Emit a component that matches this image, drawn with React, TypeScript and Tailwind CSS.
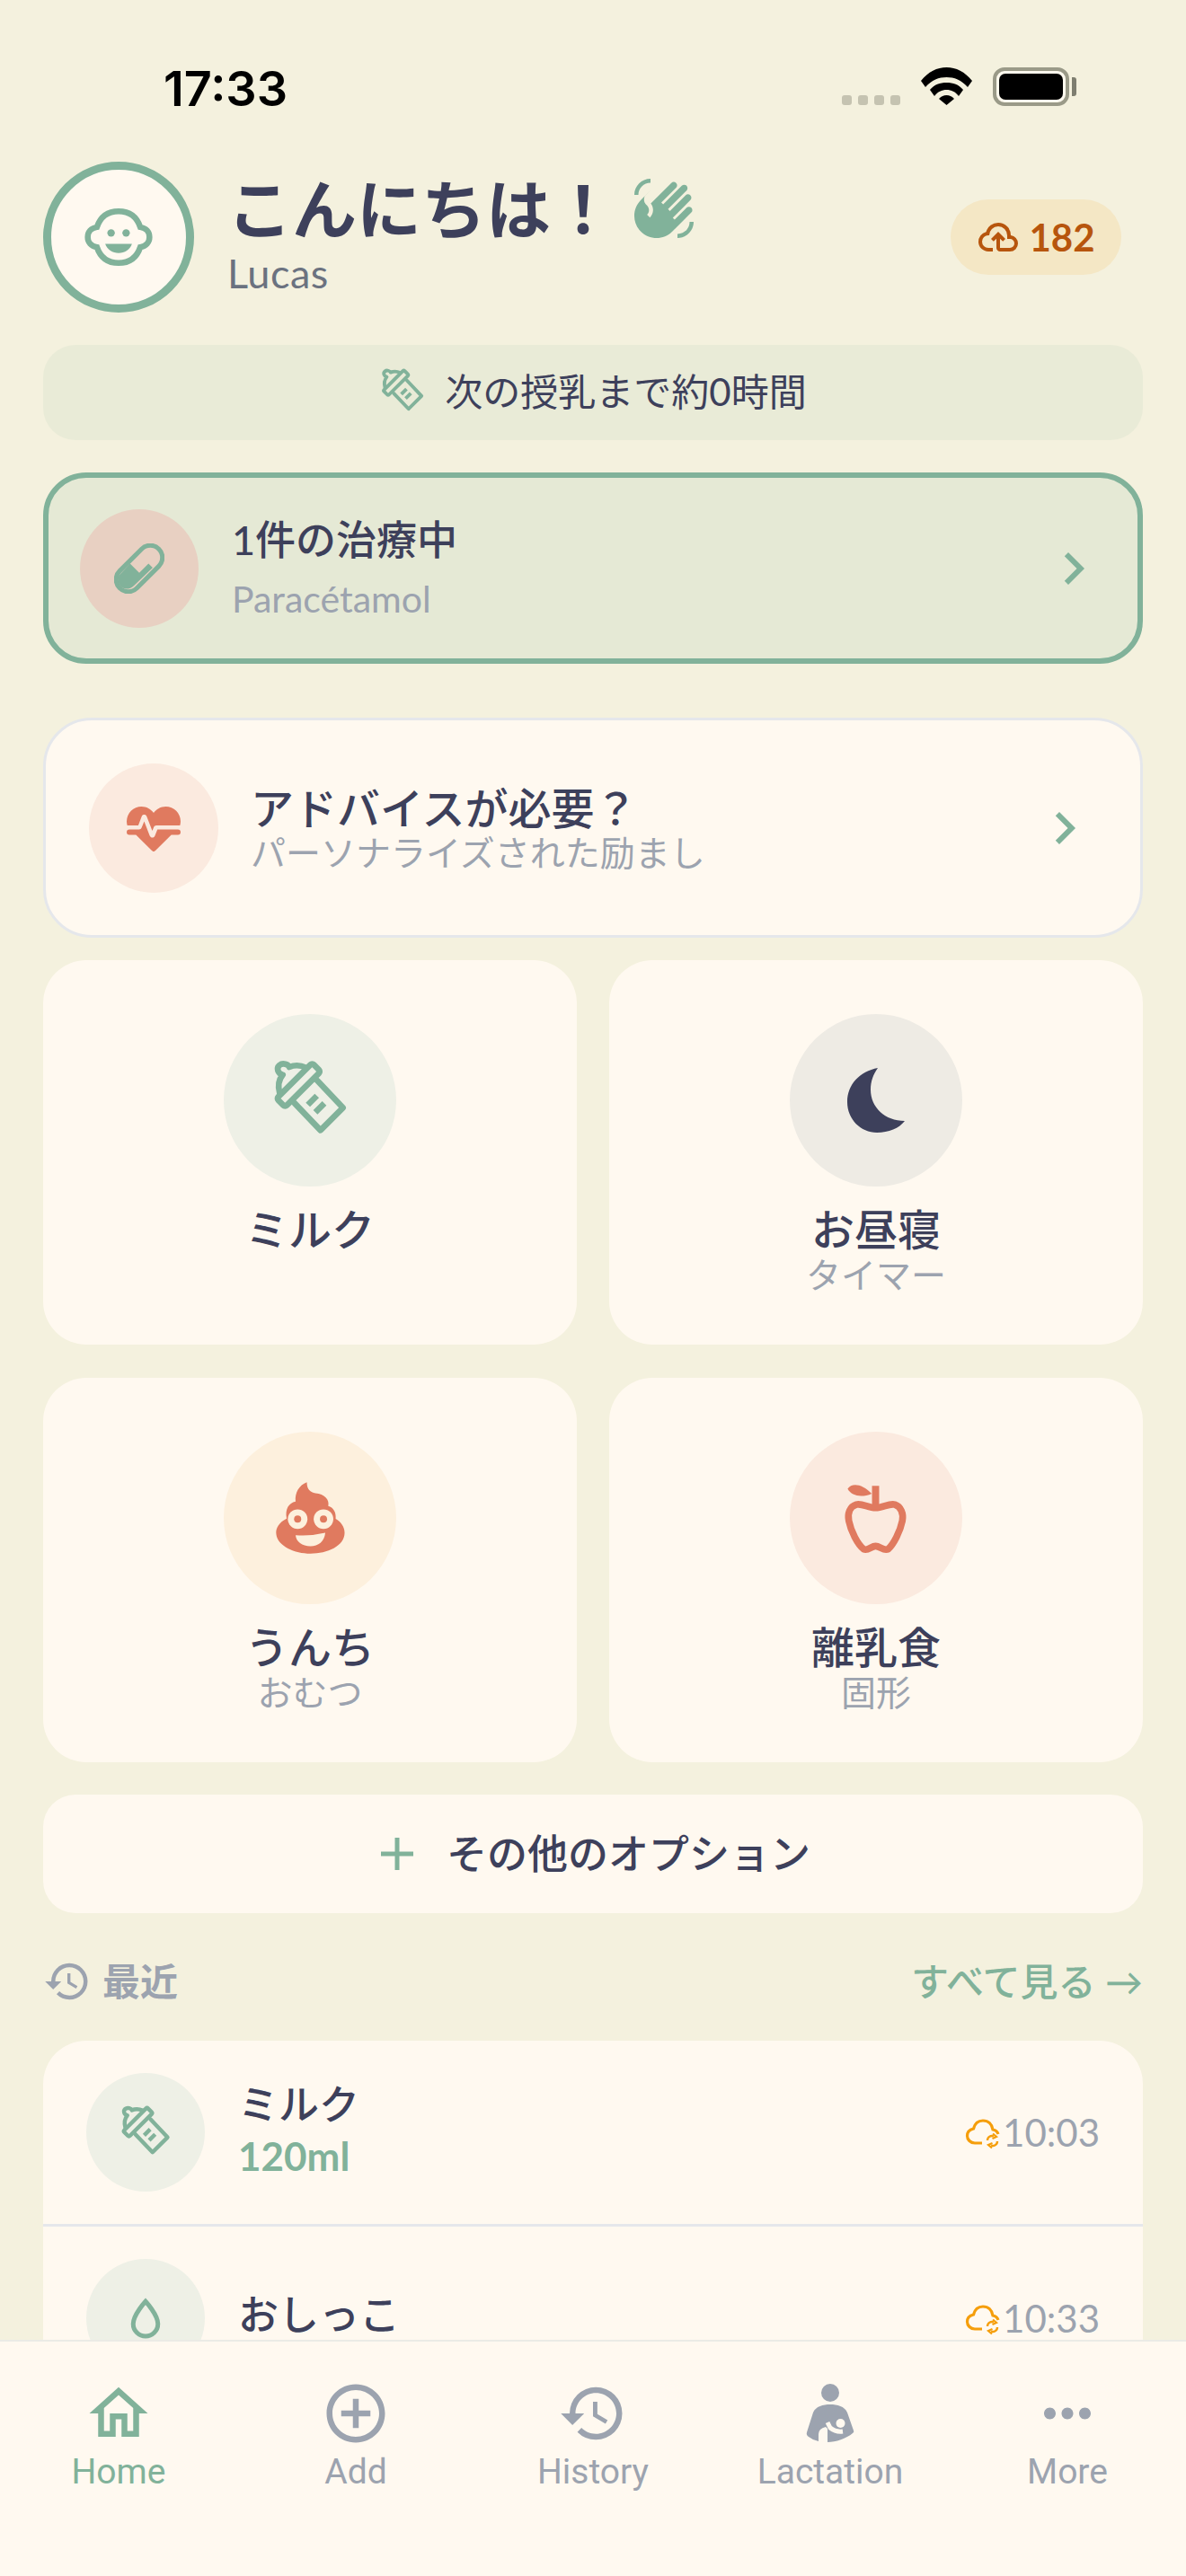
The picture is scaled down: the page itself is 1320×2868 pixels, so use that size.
import { MdAddCircleOutline, MdHistory, MdMoreHoriz } from "react-icons/md";

const jp = "font-['Lato','Noto_Sans_CJK_JP',sans-serif]";

function MdiPath({ d, className }: { d: string; className: string }) {
  return (
    <svg viewBox="0 0 24 24" fill="currentColor" className={className}>
      <path d={d} />
    </svg>
  );
}

const CHEVRON = "M8.59,16.58L13.17,12L8.59,7.41L10,6L16,12L10,18L8.59,16.58Z";
const HEART_PULSE =
  "M7.5,4A5.5,5.5 0 0,0 2,9.5C2,10 2.09,10.5 2.22,11H6.3L7.57,7.63C7.87,6.83 9.05,6.75 9.43,7.63L11.5,13L12.09,11.58C12.22,11.25 12.57,11 13,11H21.78C21.91,10.5 22,10 22,9.5A5.5,5.5 0 0,0 16.5,4C14.64,4 13,4.93 12,6.34C11,4.93 9.36,4 7.5,4V4M3,12.5A1,1 0 0,0 2,13.5A1,1 0 0,0 3,14.5H5.44L11,20C12,20.9 12,20.9 13,20L18.56,14.5H21A1,1 0 0,0 22,13.5A1,1 0 0,0 21,12.5H13.4L12.47,14.8C12.07,15.81 10.92,15.67 10.55,14.83L8.5,9.5L7.54,11.83C7.39,12.21 7.05,12.5 6.6,12.5H3Z";
const HAND_WAVE =
  "M23 17C23 20.31 20.31 23 17 23V21.5C19.5 21.5 21.5 19.5 21.5 17H23M1 7C1 3.69 3.69 1 7 1V2.5C4.5 2.5 2.5 4.5 2.5 7H1M8 4.32L3.41 8.92C.19 12.14 .19 17.37 3.41 20.59S11.86 23.81 15.08 20.59L22.15 13.5C22.64 13.03 22.64 12.24 22.15 11.75C21.66 11.26 20.87 11.26 20.38 11.75L15.96 16.17L15.25 15.46L21.79 8.92C22.28 8.43 22.28 7.64 21.79 7.15S20.5 6.66 20 7.15L14.19 13L13.5 12.27L20.37 5.38C20.86 4.89 20.86 4.1 20.37 3.61S19.09 3.12 18.6 3.61L11.71 10.5L11 9.8L16.5 4.32C17 3.83 17 3.04 16.5 2.55S15.22 2.06 14.73 2.55L7.11 10.17C8.33 11.74 8.22 14 6.78 15.42L5.72 14.36C6.67 13.41 6.67 11.86 5.72 10.9L5.36 10.55C4.87 10.06 4.6 9.41 4.6 8.72C4.6 8.2 4.76 7.7 5.04 7.28L8 4.32Z";
const CLOUD_UPLOAD =
  "M6.5 20Q4.22 20 2.61 18.43 1 16.85 1 14.58 1 12.63 2.17 11.1 3.35 9.57 5.25 9.15 5.88 6.85 7.75 5.43 9.63 4 12 4 14.93 4 16.96 6.04 19 8.07 19 11 20.73 11.2 21.86 12.5 23 13.78 23 15.5 23 17.38 21.69 18.69 20.38 20 18.5 20H13Q12.18 20 11.59 19.41 11 18.83 11 18V12.85L9.4 14.4L8 13L12 9L16 13L14.6 14.4L13 12.85V18H18.5Q19.55 18 20.27 17.27 21 16.55 21 15.5 21 14.45 20.27 13.73 19.55 13 18.5 13H17V11Q17 8.93 15.54 7.46 14.08 6 12 6 9.93 6 8.46 7.46 7 8.93 7 11H6.5Q5.05 11 4.03 12.03 3 13.05 3 14.5 3 15.95 4.03 17 5.05 18 6.5 18H9V20Z";
const HOME_OUTLINE = "M12 5.69L17 10.19V18H15V12H9V18H7V10.19L12 5.69M12 3L2 12H5V20H11V14H13V20H19V12H22L12 3Z";

function BottleIcon({ className }: { className: string }) {
  return (
    <svg viewBox="180 190 270 270" fill="none" stroke="currentColor" strokeWidth="20" strokeLinejoin="round" strokeLinecap="round" className={className}>
      <rect x="-84" y="-20" width="168" height="40" rx="8" transform="translate(277 274) rotate(-45)" />
      <path d="M264 335L350 425L425 350L340 260" />
      <path d="M308 340L338 310M333 365L363 335" strokeLinecap="butt" />
      <path d="M214 302C207 278 209 258 224 240C207 236 202 218 213 208C225 198 243 206 246 214C265 206 285 208 302 216" />
    </svg>
  );
}

function BabyFace({ className }: { className: string }) {
  return (
    <svg viewBox="0 0 84 72" className={className}>
      <path
        d="M42 5C29 5 20 12 16 24C9 25 5 30 5 36C5 42 9 47 16 48C20 60 29 67 42 67C55 67 64 60 68 48C75 47 79 42 79 36C79 30 75 25 68 24C64 12 55 5 42 5Z"
        fill="none"
        stroke="currentColor"
        strokeWidth="7"
      />
      <circle cx="33" cy="31" r="4.5" fill="currentColor" />
      <circle cx="51" cy="31" r="4.5" fill="currentColor" />
      <path d="M26 44H58C56 51 49 55 42 55C35 55 28 51 26 44Z" fill="currentColor" />
    </svg>
  );
}

function PillIcon({ className }: { className: string }) {
  return (
    <svg viewBox="0 0 60 60" className={className}>
      <rect x="-14.5" y="-33" width="29" height="66" rx="14.5" transform="translate(30 30) rotate(45)" fill="none" stroke="currentColor" strokeWidth="5.5" />
      <path d="M6 38L19 24L30 35L41 24L46 29L24 50C18 56 10 55 7 50C4 46 4 41 6 38Z" fill="currentColor" />
    </svg>
  );
}

function MoonIcon({ className }: { className: string }) {
  return (
    <svg viewBox="0 0 64 72" fill="currentColor" className={className}>
      <path d="M34 0C14 4 0 18 0 38C0 57 15 72 33 72C46 72 58 67 64 59C42 59 26 44 26 24C26 15 29 7 34 0Z" />
    </svg>
  );
}

function PoopIcon({ className }: { className: string }) {
  return (
    <svg viewBox="190 200 256 260" className={className}>
      <path
        d="M306 210C280 220 265 245 268 275C245 280 232 300 238 332C212 345 200 365 203 385C208 425 265 450 318 450C375 450 433 425 433 380C433 360 420 342 403 333C405 310 395 295 378 290C383 268 365 250 335 247C318 244 306 235 306 210Z"
        fill="#e07a5f"
      />
      <circle cx="275" cy="334" r="33" fill="#fdf0dd" />
      <circle cx="362" cy="334" r="33" fill="#fdf0dd" />
      <circle cx="275" cy="334" r="12" fill="#e07a5f" />
      <circle cx="362" cy="334" r="12" fill="#e07a5f" />
      <path d="M268 388Q318 392 368 380C365 410 345 425 318 425C290 425 270 410 268 388Z" fill="#fdf0dd" />
    </svg>
  );
}

function AppleIcon({ className }: { className: string }) {
  return (
    <svg viewBox="190 200 256 260" className={className}>
      <rect x="303" y="222" width="24" height="70" fill="#e07a5f" />
      <path d="M221 232C235 210 270 215 302 248C270 262 235 258 221 232Z" fill="#e07a5f" />
      <path
        d="M315 296C290 296 270 280 250 285C228 292 220 315 225 340C232 375 255 420 275 435C290 442 300 425 315 425C330 425 342 442 357 435C375 420 398 375 405 340C410 315 400 292 380 285C360 280 340 296 315 296Z"
        fill="none"
        stroke="#e07a5f"
        strokeWidth="23"
      />
    </svg>
  );
}

function CloudSync({ className }: { className: string }) {
  return (
    <svg viewBox="0 0 42 42" fill="none" stroke="currentColor" strokeWidth="3.2" className={className}>
      <path d="M19 33H11C6 33 2.5 29 2.5 25C2.5 21 5 18 9.5 17C11 11 15 8 20 8C26 8 30 12 31 18C33.5 18.5 36 20 37 23" />
      <path d="M25 30C25 26 29 24 32 25.5M36 31C36 35 32 37 29 35.5" strokeWidth="2.4" />
      <path d="M31 22.5L35 26L30.5 28M30 38.5L26 35L30.5 33" strokeWidth="2.2" />
    </svg>
  );
}

function DropIcon({ className }: { className: string }) {
  return (
    <svg viewBox="0 0 24 24" fill="none" stroke="currentColor" strokeWidth="2" className={className}>
      <path d="M12 4.5C12 4.5 6.5 10.5 6.5 14.5C6.5 17.6 9 20 12 20C15 20 17.5 17.6 17.5 14.5C17.5 10.5 12 4.5 12 4.5Z" />
    </svg>
  );
}

function NursingIcon({ className }: { className: string }) {
  return (
    <svg viewBox="0 0 78 78" className={className}>
      <circle cx="39" cy="16" r="10" fill="currentColor" />
      <path
        d="M39 29C31 29 23 31 20 38L13 60Q12 63 15 65Q20 69 26 70V62Q26 56 34 54L36 56V71C45 71 57 67 64 61Q66 60 65 58L58 38C55 31 47 29 39 29Z"
        fill="currentColor"
      />
      <circle cx="50.5" cy="50" r="5" fill="#fff9f0" />
      <path d="M36 49L39 55Q45 60 53 59" fill="none" stroke="#fff9f0" strokeWidth="5" />
    </svg>
  );
}

function StatusBar() {
  return (
    <div className="flex h-[180px] items-start justify-between pl-[182px] pr-[122px] pt-[69px]">
      <span className="font-['Inter',sans-serif] text-[54px] font-semibold leading-[60px] text-black">17:33</span>
      <div className="flex items-start pt-[6px]">
        <div className="mr-[23px] mt-[31px] flex gap-[7px]">
          {[0, 1, 2, 3].map((i) => (
            <span key={i} className="h-[11px] w-[11px] rounded-[3px] bg-[#c5c3b1]" />
          ))}
        </div>
        <svg viewBox="0 0 57 42" className="h-[42px] w-[57px]">
          <path d="M0 15C8 5 18 0 28.5 0S49 5 57 15L52 22C45 14 37 11 28.5 11S12 14 5 22Z" fill="#000" />
          <path d="M10 25C15 19 21 17 28.5 17S42 19 47 25L42 32C38 27 34 25 28.5 25S19 27 15 32Z" fill="#000" />
          <path d="M20 35C23 32 25 31 28.5 31S34 32 37 35L28.5 42Z" fill="#000" />
        </svg>
        <div className="ml-[23px] flex items-center">
          <div className="h-[43px] w-[85px] rounded-[13px] border-[4px] border-[#9a9a88] bg-[#fdf9ee] p-[3px]">
            <div className="h-full w-full rounded-[7px] bg-black" />
          </div>
          <div className="ml-[3px] h-[21px] w-[5px] rounded-r-[3px] bg-[#7e7e70]" />
        </div>
      </div>
    </div>
  );
}

function Header() {
  return (
    <div className="flex h-[168px] items-center pl-[48px] pr-[72px]">
      <div className="flex h-[168px] w-[168px] items-center justify-center rounded-full border-[9px] border-[#81b29a] bg-[#fff9f0] text-[#81b29a]">
        <BabyFace className="h-[68px] w-[78px]" />
      </div>
      <div className="ml-[37px] flex-1 pb-[10px]">
        <div className="flex items-center">
          <span className="text-[72px] font-bold leading-[90px] text-[#3d405b]">こんにちは！</span>
          <MdiPath d={HAND_WAVE} className="ml-[18px] h-[72px] w-[72px] text-[#81b29a]" />
        </div>
        <div className="mt-[0px] text-[45px] leading-[54px] tracking-[0.5px] text-[#6b7280]">Lucas</div>
      </div>
      <div className="flex h-[84px] w-[190px] items-center justify-center gap-[10px] rounded-full bg-[#f4e7c5] text-[#b7550d]">
        <MdiPath d={CLOUD_UPLOAD} className="h-[48px] w-[48px]" />
        <span className="text-[42px] font-bold leading-none">182</span>
      </div>
    </div>
  );
}

function ActionCard({ icon, circle, title, sub }: { icon: React.ReactNode; circle: string; title: string; sub?: string }) {
  return (
    <div className="flex h-[428px] flex-col items-center rounded-[48px] bg-[#fff9f0] pt-[60px]">
      <div className={`flex h-[192px] w-[192px] items-center justify-center rounded-full ${circle}`}>{icon}</div>
      <div className="mt-[18px] text-[48px] font-medium leading-[60px] text-[#3d405b]">{title}</div>
      {sub && <div className="mt-[2px] text-[39px] leading-[36px] text-[#9ca3af]">{sub}</div>}
    </div>
  );
}

function RecentRow({ icon, title, sub, time, divider }: { icon: React.ReactNode; title: string; sub?: string; time: string; divider?: boolean }) {
  return (
    <div className={`flex h-[204px] items-center pl-[48px] pr-[48px] ${divider ? "box-content border-b-[3px] border-[#e5e7eb]" : ""}`}>
      <div className="flex h-[132px] w-[132px] shrink-0 items-center justify-center rounded-full bg-[#eef0e6] text-[#81b29a]">{icon}</div>
      <div className="ml-[37px] flex-1 pb-[8px]">
        <div className="text-[45px] font-medium leading-[54px] text-[#3d405b]">{title}</div>
        {sub && <div className="mt-[6px] text-[44px] font-bold leading-[48px] text-[#81b29a]">{sub}</div>}
      </div>
      <CloudSync className="h-[42px] w-[42px] text-[#f59e0b]" />
      <span className="text-[42px] leading-none text-[#9ca3af]">{time}</span>
    </div>
  );
}

function TabBar() {
  const gray = "text-[#9ca3af]";
  const tabs = [
    { label: "Home", icon: <MdiPath d={HOME_OUTLINE} className="h-[78px] w-[78px]" />, color: "text-[#81b29a]" },
    { label: "Add", icon: <MdAddCircleOutline className="h-[78px] w-[78px]" />, color: gray },
    { label: "History", icon: <MdHistory className="h-[78px] w-[78px]" />, color: gray },
    { label: "Lactation", icon: <NursingIcon className="h-[78px] w-[78px]" />, color: gray },
    { label: "More", icon: <MdMoreHoriz className="h-[78px] w-[78px]" />, color: gray },
  ];
  return (
    <div className="absolute bottom-0 left-0 grid h-[263px] w-full grid-cols-5 border-t-2 border-[#ebebe6] bg-[#fff9f0] pt-[41px]">
      {tabs.map((tab) => (
        <div key={tab.label} className={`flex flex-col items-center ${tab.color}`}>
          {tab.icon}
          <span className="mt-[2px] font-['Roboto',sans-serif] text-[39px] font-normal leading-[48px]">{tab.label}</span>
        </div>
      ))}
    </div>
  );
}

export default function App() {
  return (
    <div className={`relative h-[2868px] w-[1320px] overflow-hidden bg-[#f4f1de] ${jp}`}>
      <StatusBar />
      <Header />

      <div className="mx-[48px] mt-[36px] flex h-[106px] items-center justify-center rounded-[36px] bg-[#e9ebd7] pb-[2px] text-[#3d405b]">
        <BottleIcon className="h-[52px] w-[52px] text-[#81b29a]" />
        <span className="ml-[21px] text-[42px] leading-none">次の授乳まで約0時間</span>
      </div>

      <div className="mx-[48px] mt-[36px] flex h-[213px] items-center rounded-[48px] border-[6px] border-[#81b29a] bg-[#e5e9d5] pl-[35px] pr-[35px]">
        <div className="flex h-[132px] w-[132px] items-center justify-center rounded-full bg-[#e8d0c2] text-[#81b29a]">
          <PillIcon className="h-[56px] w-[56px]" />
        </div>
        <div className="ml-[37px] flex-1">
          <div className="text-[45px] font-medium leading-[60px] text-[#3d405b]">1件の治療中</div>
          <div className="mt-[9px] text-[41px] leading-[54px] text-[#9ca3af]">Paracétamol</div>
        </div>
        <MdiPath d={CHEVRON} className="h-[72px] w-[72px] text-[#81b29a]" />
      </div>

      <div className="mx-[48px] mt-[60px] flex h-[245px] items-center rounded-[54px] border-[3px] border-[#e5e7eb] bg-[#fff9f0] pl-[48px] pr-[48px]">
        <div className="flex h-[144px] w-[144px] items-center justify-center rounded-full bg-[#fbeadf] text-[#e07a5f]">
          <MdiPath d={HEART_PULSE} className="h-[72px] w-[72px]" />
        </div>
        <div className="ml-[36px] flex-1 pb-[6px]">
          <div className="text-[48px] font-medium leading-[60px] text-[#3d405b]">アドバイスが必要？</div>
          <div className="text-[39px] leading-[38px] text-[#9ca3af]">パーソナライズされた励まし</div>
        </div>
        <MdiPath d={CHEVRON} className="h-[72px] w-[72px] text-[#81b29a]" />
      </div>

      <div className="mx-[48px] mt-[25px] grid grid-cols-2 gap-x-[36px] gap-y-[37px]">
        <ActionCard title="ミルク" circle="bg-[#eef0e6]" icon={<BottleIcon className="h-[90px] w-[90px] text-[#81b29a]" />} />
        <ActionCard title="お昼寝" sub="タイマー" circle="bg-[#eeebe4]" icon={<MoonIcon className="h-[72px] w-[64px] text-[#3d405b]" />} />
        <ActionCard title="うんち" sub="おむつ" circle="bg-[#fdf0dd]" icon={<PoopIcon className="h-[86px] w-[85px]" />} />
        <ActionCard title="離乳食" sub="固形" circle="bg-[#fbeadf]" icon={<AppleIcon className="h-[86px] w-[85px]" />} />
      </div>

      <div className="mx-[48px] mt-[36px] flex h-[132px] items-center justify-center rounded-[36px] bg-[#fff9f0] pl-[6px]">
        <svg viewBox="0 0 36 36" fill="#81b29a" className="h-[36px] w-[36px]">
          <path d="M15.5 0H20.5V15.5H36V20.5H20.5V36H15.5V20.5H0V15.5H15.5Z" />
        </svg>
        <span className="ml-[37px] text-[45px] font-medium leading-none text-[#3d405b]">その他のオプション</span>
      </div>

      <div className="mx-[48px] mt-[46px] flex h-[60px] items-center justify-between">
        <div className="flex items-center text-[#9ca3af]">
          <MdHistory className="h-[54px] w-[54px]" />
          <span className="ml-[12px] text-[42px] font-bold leading-none">最近</span>
        </div>
        <span className="text-[42px] font-medium leading-none text-[#81b29a]">すべて見る →</span>
      </div>

      <div className="mx-[48px] mt-[36px] rounded-t-[48px] bg-[#fff9f0] pb-[200px]">
        <RecentRow divider icon={<BottleIcon className="h-[60px] w-[60px]" />} title="ミルク" sub="120ml" time="10:03" />
        <RecentRow icon={<DropIcon className="h-[60px] w-[60px]" />} title="おしっこ" time="10:33" />
      </div>

      <TabBar />
    </div>
  );
}
